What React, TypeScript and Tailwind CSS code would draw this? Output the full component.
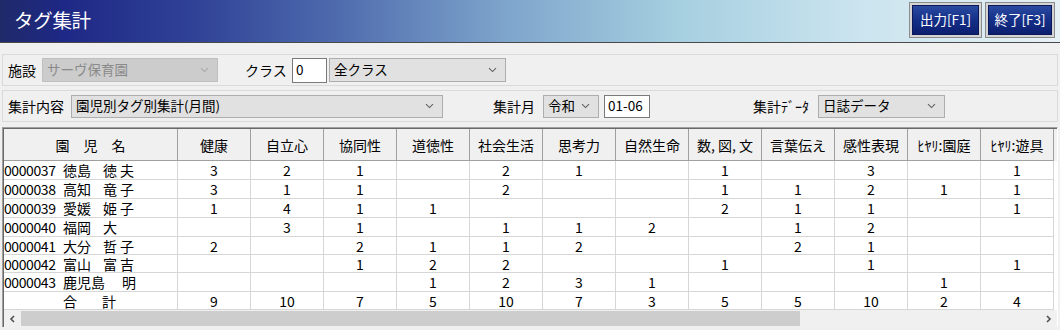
import React from "react";

const FONT = { fontFamily: '"Noto Sans CJK JP", "Noto Sans", sans-serif' };

function Chevron({ color = "#606060" }: { color?: string }) {
  return (
    <svg width="9" height="6" viewBox="0 0 9 6" className="shrink-0">
      <path d="M1 1.2 L4.5 4.6 L8 1.2" fill="none" stroke={color} strokeWidth="1.1" />
    </svg>
  );
}

function Combo({
  w,
  text,
  disabled,
  h = "h-[23px]",
}: {
  w: string;
  text: string;
  disabled?: boolean;
  h?: string;
}) {
  return (
    <div
      className={`${w} ${h} shrink-0 flex items-center justify-between pl-[4px] pr-[8px] border ${
        disabled
          ? "bg-[#cccccc] border-[#bfbfbf] text-[#8a8a8a]"
          : "bg-[#e1e1e1] border-[#adadad] text-black"
      } text-[13.5px] leading-none whitespace-pre`}
    >
      <span>{text}</span>
      <Chevron color={disabled ? "#a8a8a8" : "#606060"} />
    </div>
  );
}

function Input({ w, text, h = "h-[23px]" }: { w: string; text: string; h?: string }) {
  return (
    <div
      className={`${w} ${h} shrink-0 flex items-center pl-[3px] bg-white border border-[#7a7a7a] text-[13.5px] leading-none`}
    >
      {text}
    </div>
  );
}

function HeadButton({ label }: { label: string }) {
  return (
    <div className="h-[36px] border border-[#8c8c8c] bg-[#d4d4d4] p-[2px]">
      <div className="h-full px-[6px] flex items-center justify-center border border-[#0a1858] bg-[linear-gradient(to_bottom,#2a4aa0,#142f88_50%,#0c1f70)] text-white text-[13.5px] leading-none whitespace-nowrap">
        {label}
      </div>
    </div>
  );
}

const cols = [
  "健康",
  "自立心",
  "協同性",
  "道徳性",
  "社会生活",
  "思考力",
  "自然生命",
  "数, 図, 文",
  "言葉伝え",
  "感性表現",
  "ﾋﾔﾘ:園庭",
  "ﾋﾔﾘ:遊具",
];

type Row = { id: string; sur: string; given: string; gap: string; v: (number | null)[]; h: string };
const n = null;
const rows: Row[] = [
  { id: "0000037", sur: "徳島", given: "徳夫", gap: "ml-[12px]", v: [3, 2, 1, n, 2, 1, n, 1, n, 3, n, 1], h: "h-[19px]" },
  { id: "0000038", sur: "高知", given: "竜子", gap: "ml-[12px]", v: [3, 1, 1, n, 2, n, n, 1, 1, 2, 1, 1], h: "h-[19px]" },
  { id: "0000039", sur: "愛媛", given: "姫子", gap: "ml-[12px]", v: [1, 4, 1, 1, n, n, n, 2, 1, 1, n, 1], h: "h-[19px]" },
  { id: "0000040", sur: "福岡", given: "大", gap: "ml-[12px]", v: [n, 3, 1, n, 1, 1, 2, n, 1, 2, n, n], h: "h-[19px]" },
  { id: "0000041", sur: "大分", given: "哲子", gap: "ml-[12px]", v: [2, n, 2, 1, 1, 2, n, n, 2, 1, n, n], h: "h-[18px]" },
  { id: "0000042", sur: "富山", given: "富吉", gap: "ml-[12px]", v: [n, n, 1, 2, 2, n, n, 1, n, 1, n, 1], h: "h-[18px]" },
  { id: "0000043", sur: "鹿児島", given: "明", gap: "ml-[17px]", v: [n, n, n, 1, 2, 3, 1, n, n, n, 1, n], h: "h-[19px]" },
];
const totals = [9, 10, 7, 5, 10, 7, 3, 5, 5, 10, 2, 4];

const GRID = "grid grid-cols-[174px_repeat(12,73px)]";

export default function App() {
  return (
    <div className="w-[1060px] h-[330px] overflow-hidden bg-[#f0f0f0] text-black" style={FONT}>
      {/* Title bar */}
      <div className="h-[43px] border-b border-[#4a4a4a] bg-[linear-gradient(to_right,#1f2a6a_0%,#1e2886_6%,#2f4196_18%,#4f6cae_32%,#7fa6cc_48%,#a6cfe0_64%,#c9e3ee_80%,#e6f1f6_100%)] flex items-center justify-between pl-[14px] pr-[5px]">
        <div className="text-white text-[19.5px] leading-none tracking-[-0.3px] pb-[2px]">タグ集計</div>
        <div className="flex items-center gap-[3px] pb-[2px]">
          <div className="w-[73px]">
            <HeadButton label="出力[F1]" />
          </div>
          <div className="w-[70px]">
            <HeadButton label="終了[F3]" />
          </div>
        </div>
      </div>

      {/* Row 1 */}
      <div className="mt-[11px] mx-[2px] h-[32px] border border-[#dadada] flex items-center pl-[5px] text-[14px] leading-none">
        <span className="w-[28px] shrink-0">施設</span>
        <div className="ml-[6px]">
          <Combo w="w-[176px]" text="サーヴ保育園" disabled h="h-[24px]" />
        </div>
        <span className="ml-[27px] w-[42px] shrink-0">クラス</span>
        <div className="ml-[5px]">
          <Input w="w-[35px]" text="0" h="h-[25px]" />
        </div>
        <div className="ml-[2px]">
          <Combo w="w-[177px]" text="全クラス" h="h-[24px]" />
        </div>
      </div>

      {/* Row 2 */}
      <div className="mt-[4px] mx-[2px] h-[32px] border border-[#dadada] flex items-center pl-[5px] text-[14px] leading-none">
        <span className="w-[56px] shrink-0">集計内容</span>
        <div className="ml-[7px]">
          <Combo w="w-[372px]" text="園児別タグ別集計(月間)" />
        </div>
        <span className="ml-[50px] w-[42px] shrink-0">集計月</span>
        <div className="ml-[8px]">
          <Combo w="w-[56px]" text="令和" />
        </div>
        <div className="ml-[5px]">
          <Input w="w-[46px]" text="01-06" />
        </div>
        <span className="ml-[103px] w-[57px] shrink-0 whitespace-nowrap">集計ﾃﾞｰﾀ</span>
        <div className="ml-[8px]">
          <Combo w="w-[127px]" text="日誌データ" />
        </div>
      </div>

      {/* Table frame */}
      <div className="mt-[5px] ml-[2px] mr-[2px] border-t border-l border-[#a0a0a0] border-r border-r-white">
        <div className="border-t border-l border-[#696969] h-[199px] flex flex-col bg-white">
          {/* Header */}
          <div className={`${GRID} h-[32px] bg-[#f0f0f0] text-[14px] leading-none`}>
            <div className="border-r border-b border-[#a0a0a0] flex items-center justify-center whitespace-pre">
              園　児　名
            </div>
            {cols.map((c) => (
              <div
                key={c}
                className="border-r border-b border-[#a0a0a0] flex items-center justify-center whitespace-pre"
              >
                {c}
              </div>
            ))}
          </div>
          {/* Rows */}
          {rows.map((r) => (
            <div key={r.id} className={`${GRID} ${r.h} text-[14px] leading-none`}>
              <div className="border-r border-b border-[#d6d6d6] flex items-center whitespace-nowrap">
                <span className="w-[59px] shrink-0 tracking-[-0.4px]">{r.id}</span>
                <span>{r.sur}</span>
                <span className={`${r.gap} tracking-[3px]`}>{r.given}</span>
              </div>
              {r.v.map((x, i) => (
                <div key={i} className="border-r border-b border-[#d6d6d6] flex items-center justify-center">
                  {x ?? ""}
                </div>
              ))}
            </div>
          ))}
          <div className={`${GRID} h-[18px] text-[14px] leading-none`}>
            <div className="border-r border-b border-[#d6d6d6] flex items-center whitespace-pre">
              <span className="w-[59px] shrink-0" />
              <span className="tracking-[-1px]">合　　計</span>
            </div>
            {totals.map((x, i) => (
              <div key={i} className="border-r border-b border-[#d6d6d6] flex items-center justify-center">
                {x}
              </div>
            ))}
          </div>
          <div className="flex-1" />
          {/* Scrollbar */}
          <div className="h-[17px] bg-[#f0f0f0] flex items-center">
            <div className="w-[17px] h-full flex items-center justify-center">
              <svg width="7" height="8" viewBox="0 0 7 8">
                <path d="M5 1 L2 4 L5 7" fill="none" stroke="#505050" strokeWidth="1.6" />
              </svg>
            </div>
            <div className="flex-1 h-full flex items-center">
              <div className="w-[779px] h-[15px] bg-[#cdcdcd]" />
            </div>
            <div className="w-[17px] h-full flex items-center justify-center">
              <svg width="7" height="8" viewBox="0 0 7 8">
                <path d="M2 1 L5 4 L2 7" fill="none" stroke="#505050" strokeWidth="1.6" />
              </svg>
            </div>
          </div>
        </div>
      </div>
    </div>
  );
}
